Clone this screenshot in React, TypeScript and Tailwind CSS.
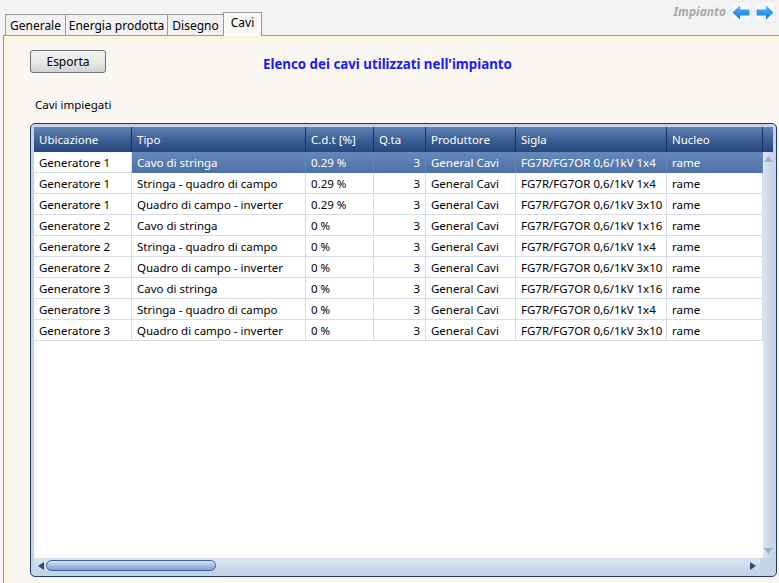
import React from 'react';

const COLS = [
  { key: 'ubi',  label: 'Ubicazione', w: 98 },
  { key: 'tipo', label: 'Tipo',       w: 174 },
  { key: 'cdt',  label: 'C.d.t [%]',  w: 68 },
  { key: 'qta',  label: 'Q.ta',       w: 52 },
  { key: 'prod', label: 'Produttore', w: 90 },
  { key: 'sigla', label: 'Sigla',     w: 151 },
  { key: 'nuc',  label: 'Nucleo',     w: 96 },
];

const ROWS = [
  ['Generatore 1', 'Cavo di stringa',            '0.29 %', '3', 'General Cavi', 'FG7R/FG7OR 0,6/1kV 1x4',  'rame'],
  ['Generatore 1', 'Stringa - quadro di campo',  '0.29 %', '3', 'General Cavi', 'FG7R/FG7OR 0,6/1kV 1x4',  'rame'],
  ['Generatore 1', 'Quadro di campo - inverter', '0.29 %', '3', 'General Cavi', 'FG7R/FG7OR 0,6/1kV 3x10', 'rame'],
  ['Generatore 2', 'Cavo di stringa',            '0 %',    '3', 'General Cavi', 'FG7R/FG7OR 0,6/1kV 1x16', 'rame'],
  ['Generatore 2', 'Stringa - quadro di campo',  '0 %',    '3', 'General Cavi', 'FG7R/FG7OR 0,6/1kV 1x4',  'rame'],
  ['Generatore 2', 'Quadro di campo - inverter', '0 %',    '3', 'General Cavi', 'FG7R/FG7OR 0,6/1kV 3x10', 'rame'],
  ['Generatore 3', 'Cavo di stringa',            '0 %',    '3', 'General Cavi', 'FG7R/FG7OR 0,6/1kV 1x16', 'rame'],
  ['Generatore 3', 'Stringa - quadro di campo',  '0 %',    '3', 'General Cavi', 'FG7R/FG7OR 0,6/1kV 1x4',  'rame'],
  ['Generatore 3', 'Quadro di campo - inverter', '0 %',    '3', 'General Cavi', 'FG7R/FG7OR 0,6/1kV 3x10', 'rame'],
];

const TABS = [
  { label: 'Generale',         w: 61 },
  { label: 'Energia prodotta', w: 103 },
  { label: 'Disegno',          w: 57 },
];

function NavArrow({ dir }: { dir: 'left' | 'right' }) {
  return (
    <div className="w-[22px] h-[22px] flex items-center justify-center rounded-[2px] border border-[#ececec] bg-[#f6f6f6]">
      <svg width="18" height="15" viewBox="0 0 18 15" style={{ transform: dir === 'right' ? 'scaleX(-1)' : undefined }}>
        <defs>
          <linearGradient id={`ag-${dir}`} x1="0" y1="0" x2="0" y2="1">
            <stop offset="0" stopColor="#5cb6ff" />
            <stop offset="1" stopColor="#0a78e0" />
          </linearGradient>
        </defs>
        <path d="M0.5 7.5 L8 0.5 L8 4.5 L17.5 4.5 L17.5 10.5 L8 10.5 L8 14.5 Z" fill={`url(#ag-${dir})`} />
      </svg>
    </div>
  );
}

export default function App() {
  return (
    <div
      className="w-[779px] h-[583px] bg-[#f3f3f3] flex flex-col overflow-hidden text-[11.5px] text-black"
      style={{ fontFamily: '"Noto Sans", "Open Sans", sans-serif' }}
    >
      {/* tab strip */}
      <div className="h-[35px] flex items-end justify-between pl-[5px] shrink-0">
        <div className="flex items-end">
          {TABS.map(t => (
            <div
              key={t.label}
              style={{ width: t.w }}
              className="h-[21px] -mr-px border border-b-0 border-[#9a9a9a] bg-[#f2f2f2] flex items-center justify-center text-[12px] leading-none pt-[1px]"
            >
              {t.label}
            </div>
          ))}
          <div className="w-[39px] h-[24px] border border-b-0 border-[#9a9a9a] bg-[#faf8f3] flex items-center justify-center text-[12px] leading-none -mb-px relative z-10 pb-[3px]">
            Cavi
          </div>
        </div>
        <div className="self-start mt-[1px] flex items-center gap-[2px] pr-[3px]">
          <span className="text-[12px] italic font-bold text-[#a8a8a8] mr-[2px]">Impianto</span>
          <NavArrow dir="left" />
          <NavArrow dir="right" />
        </div>
      </div>

      {/* panel */}
      <div className="flex-1 ml-[3px] border-l border-t border-[#9a9a9a] bg-[#faf7f2] shadow-[inset_3px_3px_0_#fdf4e0] flex flex-col pl-[26px] pr-[3px]">
        <div className="flex items-start mt-[14px]">
          <button className="w-[76px] h-[23px] rounded-[3px] border border-[#707070] bg-gradient-to-b from-[#f3f3f3] via-[#e9e9e9] to-[#d3d3d3] text-[12px] leading-none">
            Esporta
          </button>
          <div className="ml-[157px] mt-[6px] text-[13.3px] font-bold text-[#1a1aff] leading-[16px]">
            Elenco dei cavi utilizzati nell'impianto
          </div>
        </div>

        <div className="mt-[24px] ml-[5px] text-[11.5px] leading-[16px]">Cavi impiegati</div>

        {/* grid frame */}
        <div className="mt-[10px] w-[747px] h-[454px] rounded-[5px] border border-[#1f3a66] bg-[#c3d3ea] p-[3px] flex flex-col">
          <div className="flex-1 flex flex-col bg-white overflow-hidden">
            {/* header */}
            <div className="flex h-[25px] shrink-0 bg-gradient-to-b from-[#6283b5] via-[#3d6096] to-[#26477c] text-white">
              {COLS.map(c => (
                <div
                  key={c.key}
                  style={{ width: c.w }}
                  className="h-full flex items-center pl-[5px] border-r border-[#1c3560] leading-none"
                >
                  {c.label}
                </div>
              ))}
              <div className="flex-1 h-full" />
            </div>

            <div className="flex-1 flex min-h-0">
              {/* rows */}
              <div className="flex-1 flex flex-col">
                {ROWS.map((r, i) => (
                  <div key={i} className="flex h-[21px]">
                    {r.map((v, j) => {
                      const sel = i === 0 && j > 0;
                      return (
                        <div
                          key={j}
                          style={{ width: COLS[j].w }}
                          className={
                            'h-full flex items-center px-[5px] pt-[2px] border-r border-b border-[#d5dce6] leading-none whitespace-nowrap overflow-hidden ' +
                            (j === 3 ? 'justify-end ' : '') +
                            (sel ? 'bg-gradient-to-b from-[#6688b9] to-[#4d72a7] text-white border-r-[#6688b9] border-b-[#4d72a7]' : '')
                          }
                        >
                          {v}
                        </div>
                      );
                    })}
                  </div>
                ))}
              </div>
              {/* vertical scrollbar */}
              <div className="w-[13px] bg-gradient-to-r from-[#dbe5f1] to-[#c4d3e7] flex flex-col items-center justify-between py-[4px]">
                <svg width="9" height="6" viewBox="0 0 9 6"><path d="M4.5 0 L9 6 L0 6 Z" fill="#9fb0c9" /></svg>
                <svg width="9" height="6" viewBox="0 0 9 6"><path d="M0 0 L9 0 L4.5 6 Z" fill="#9fb0c9" /></svg>
              </div>
            </div>

            {/* horizontal scrollbar */}
            <div className="h-[15px] shrink-0 flex bg-gradient-to-b from-[#dbe5f1] to-[#c4d3e7]">
              <div className="flex-1 flex items-center pl-[4px] pr-[4px]">
                <svg width="6" height="8" viewBox="0 0 6 8"><path d="M6 0 L6 8 L0 4 Z" fill="#2a4a7e" /></svg>
                <div className="ml-[2px] w-[170px] h-[11px] rounded-full border border-[#3c5f95] bg-gradient-to-b from-[#d6e3f5] via-[#a9c1e2] to-[#7f9fcf]" />
                <div className="flex-1" />
                <svg width="6" height="8" viewBox="0 0 6 8"><path d="M0 0 L0 8 L6 4 Z" fill="#2a4a7e" /></svg>
              </div>
              <div className="w-[13px] bg-[#c4d3e7]" />
            </div>
          </div>
        </div>
      </div>
    </div>
  );
}
